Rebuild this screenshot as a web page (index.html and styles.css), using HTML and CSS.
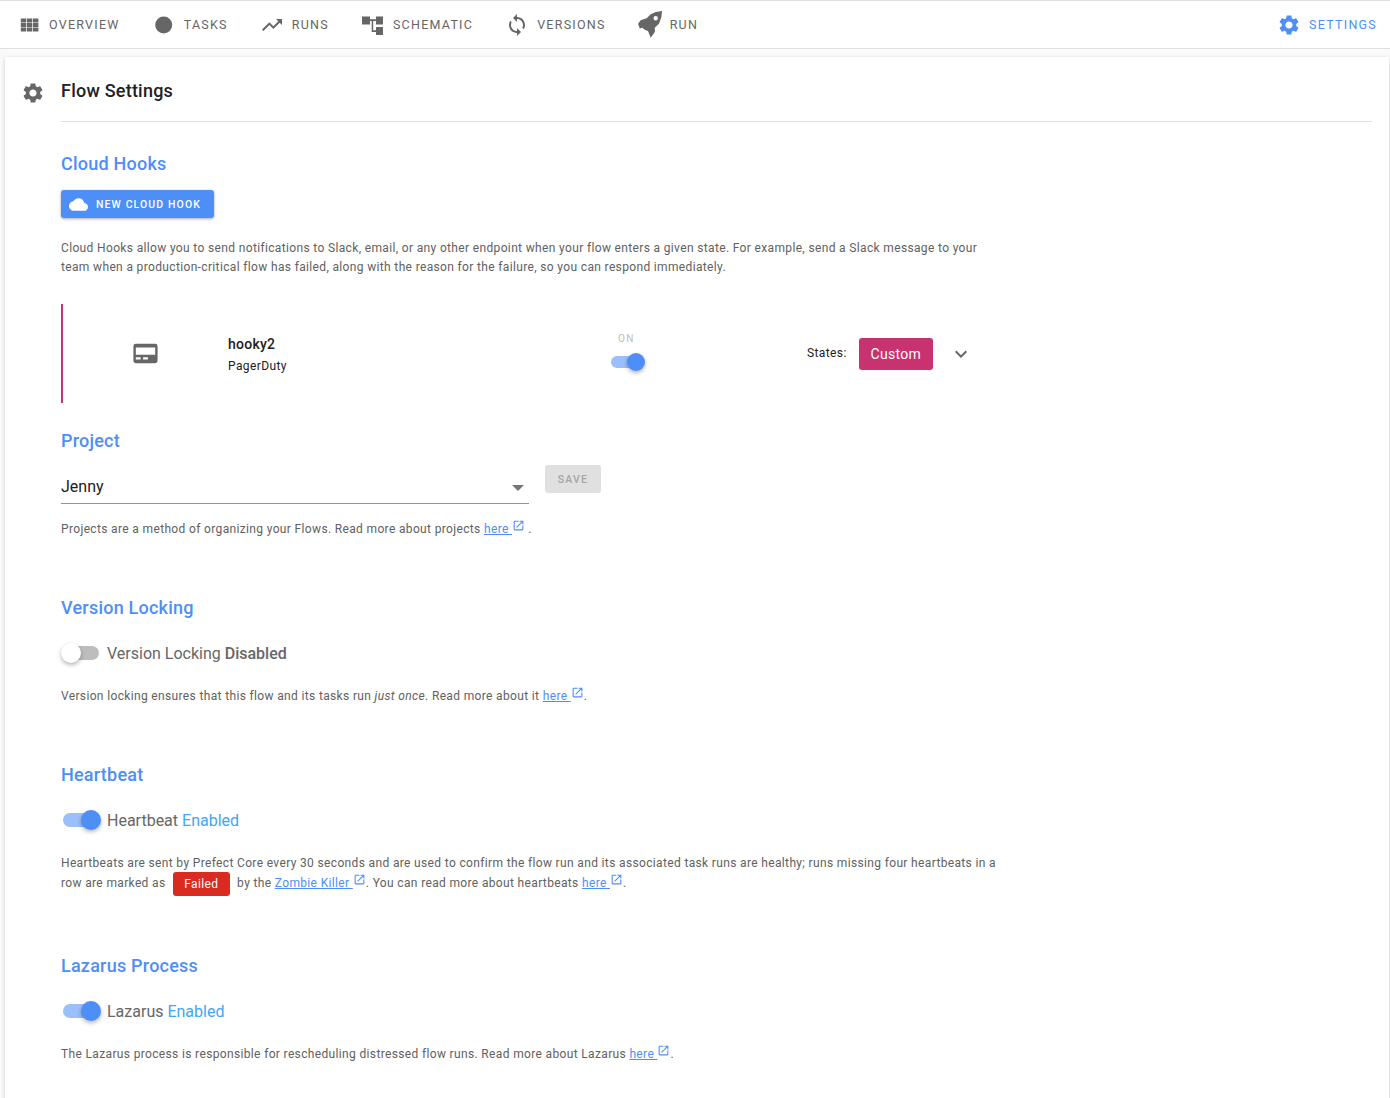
FILE: index.html
```html
<!DOCTYPE html>
<html lang="en">
    <head>
        <meta charset="utf-8">
        <title>Flow Settings</title>
        <link rel="stylesheet" href="styles.css">
    </head>
    <body>
        <svg class="sprite">
            <symbol id="gear" viewBox="0 0 24 24"><path d="M19.14 12.94c.04-.3.06-.61.06-.94 0-.32-.02-.64-.07-.94l2.03-1.58c.18-.14.23-.41.12-.61l-1.92-3.32c-.12-.22-.37-.29-.59-.22l-2.39.96c-.5-.38-1.03-.7-1.62-.94L14.4 2.81c-.04-.24-.24-.41-.48-.41h-3.84c-.24 0-.43.17-.47.41l-.36 2.54c-.59.24-1.13.57-1.62.94l-2.39-.96c-.22-.08-.47 0-.59.22L2.74 8.87c-.12.21-.08.47.12.61l2.03 1.58c-.05.3-.09.63-.09.94s.02.64.07.94l-2.03 1.58c-.18.14-.23.41-.12.61l1.92 3.32c.12.22.37.29.59.22l2.39-.96c.5.38 1.03.7 1.62.94l.36 2.54c.05.24.24.41.48.41h3.84c.24 0 .44-.17.47-.41l.36-2.54c.59-.24 1.13-.56 1.62-.94l2.39.96c.22.08.47 0 .59-.22l1.92-3.32c.12-.22.07-.47-.12-.61l-2.01-1.58zM12 15.6c-1.98 0-3.6-1.62-3.6-3.6s1.62-3.6 3.6-3.6 3.6 1.62 3.6 3.6-1.62 3.6-3.6 3.6z"/></symbol>
            <symbol id="open" viewBox="0 0 24 24"><path d="M19 19H5V5h7V3H5c-1.11 0-2 .9-2 2v14c0 1.1.89 2 2 2h14c1.1 0 2-.9 2-2v-7h-2v7zM14 3v2h3.59l-9.83 9.83 1.41 1.41L19 6.41V10h2V3h-7z"/></symbol>
        </svg>

        <nav class="tabs">
            <a class="tab">
                <svg class="tab-icon" viewBox="-0.6 0 24 24"><path d="M3.2 5.5h5.4v3.9H3.2zM9.3 5.5h5.4v3.9H9.3zM15.4 5.5h5.4v3.9h-5.4zM3.2 10h5.4v3.9H3.2zM9.3 10h5.4v3.9H9.3zM15.4 10h5.4v3.9h-5.4zM3.2 14.6h5.4v3.9H3.2zM9.3 14.6h5.4v3.9H9.3zM15.4 14.6h5.4v3.9h-5.4z"/></svg>
                Overview
            </a>
            <a class="tab">
                <svg class="tab-icon" viewBox="0 0 24 24"><circle cx="11.7" cy="12" r="8.5"/></svg>
                Tasks
            </a>
            <a class="tab">
                <svg class="tab-icon" viewBox="0 0 24 24"><path d="M16 6l2.29 2.29-4.88 4.88-4-4L2 16.59 3.41 18l6-6 4 4 6.3-6.29L22 12V6z"/></svg>
                Runs
            </a>
            <a class="tab">
                <svg class="tab-icon" viewBox="0 0 24 24"><path d="M1 3.5h8v2.7h6V3.500h7v8h-7V8h-2.800v9.200H15V14h7v8h-7v-3h-4.300V8H9v3.500H1z"/></svg>
                Schematic
            </a>
            <a class="tab">
                <svg class="tab-icon" viewBox="0 0 24 24"><path d="M12 4V1L8 5l4 4V6c3.31 0 6 2.69 6 6 0 1.01-.25 1.97-.7 2.8l1.46 1.46C19.54 15.03 20 13.57 20 12c0-4.42-3.58-8-8-8zm0 14c-3.31 0-6-2.69-6-6 0-1.01.25-1.97.7-2.8L5.24 7.74C4.46 8.97 4 10.43 4 12c0 4.42 3.58 8 8 8v3l4-4-4-4v3z"/></svg>
                Versions
            </a>
            <a class="tab">
                <svg class="tab-icon tab-icon-run" viewBox="0 0 24 27"><path fill-rule="evenodd" d="M0 12.700L2.700 9.300l6-2 4-4 5-2.300L24 0l-.6 6-2.400 6.700-4.300 4 .3 4-4.300 6-2.700-6.700-3.300-1.300-2.400-2-2.500.8zM17.700 5.100a2.200 2.200 0 1 0 0 4.400 2.200 2.200 0 0 0 0-4.400z"/></svg>
                Run
            </a>
            <a class="tab tab-active">
                <svg class="tab-icon"><use href="#gear"/></svg>
                Settings
            </a>
        </nav>

        <main class="card">
            <header class="card-title">
                <svg class="title-icon"><use href="#gear"/></svg>
                <h1>Flow Settings</h1>
            </header>

            <div class="content">
                <section class="hooks">
                    <h2>Cloud Hooks</h2>
                    <button class="btn-hook" type="button">
                        <svg viewBox="0 0 24 24"><path d="M19.35 10.04C18.67 6.59 15.64 4 12 4 9.11 4 6.6 5.64 5.35 8.04 2.34 8.36 0 10.91 0 14c0 3.31 2.69 6 6 6h13c2.76 0 5-2.24 5-5 0-2.64-2.05-4.78-4.65-4.96z"/></svg>
                        New Cloud Hook
                    </button>
                    <p class="text">Cloud Hooks allow you to send notifications to Slack, email, or any other endpoint when your flow enters a given state. For example, send a Slack message to your team when a production-critical flow has failed, along with the reason for the failure, so you can respond immediately.</p>

                    <div class="hook">
                        <svg class="hook-icon" viewBox="0 0 24 24"><path fill-rule="evenodd" d="M4 4h16a2 2 0 0 1 2 2v12a2 2 0 0 1-2 2H4a2 2 0 0 1-2-2V6a2 2 0 0 1 2-2zm0 3v6h16V7zm0 8v2h4v-2zm6 0v2h4v-2z"/></svg>
                        <div class="hook-name">
                            <strong>hooky2</strong>
                            <span>PagerDuty</span>
                        </div>
                        <div class="hook-toggle">
                            <span class="on-label">ON</span>
                            <span class="switch switch-on switch-small"></span>
                        </div>
                        <div class="hook-states">
                            <span class="states-label">States:</span>
                            <span class="btn-custom">Custom</span>
                            <svg class="chevron" viewBox="0 0 24 24"><path d="M7.41 8.59L12 13.17l4.59-4.58L18 10l-6 6-6-6z"/></svg>
                        </div>
                    </div>
                </section>

                <section class="project">
                    <h2>Project</h2>
                    <div class="project-row">
                        <div class="select">Jenny<span class="caret"></span></div>
                        <button class="btn-save" type="button">Save</button>
                    </div>
                    <p class="text">Projects are a method of organizing your Flows. Read more about projects <a href="#">here </a><svg class="open"><use href="#open"/></svg> .</p>
                </section>

                <section class="setting">
                    <h2>Version Locking</h2>
                    <div class="toggle-row">
                        <span class="switch"></span>
                        <span>Version Locking <b class="disabled">Disabled</b></span>
                    </div>
                    <p class="text">Version locking ensures that this flow and its tasks run <em>just once</em>. Read more about it <a href="#">here </a><svg class="open"><use href="#open"/></svg>.</p>
                </section>

                <section class="setting setting-heartbeat">
                    <h2>Heartbeat</h2>
                    <div class="toggle-row">
                        <span class="switch switch-on"></span>
                        <span>Heartbeat <span class="enabled">Enabled</span></span>
                    </div>
                    <p class="text text-tall">Heartbeats are sent by Prefect Core every 30 seconds and are used to confirm the flow run and its associated task runs are healthy; runs missing four heartbeats in a row are marked as <span class="failed">Failed</span> by the <a href="#">Zombie Killer </a><svg class="open"><use href="#open"/></svg>. You can read more about heartbeats <a href="#">here </a><svg class="open"><use href="#open"/></svg>.</p>
                </section>

                <section class="setting">
                    <h2>Lazarus Process</h2>
                    <div class="toggle-row">
                        <span class="switch switch-on"></span>
                        <span>Lazarus <span class="enabled">Enabled</span></span>
                    </div>
                    <p class="text">The Lazarus process is responsible for rescheduling distressed flow runs. Read more about Lazarus <a href="#">here </a><svg class="open"><use href="#open"/></svg>.</p>
                </section>
            </div>
        </main>
    </body>
</html>
```

FILE: styles.css
```css
* {
    box-sizing: border-box;
}
html, body {
    height: 1098px;
    overflow: hidden;
}
body {
    margin: 0;
    background-color: #fafafa;
    font-family: Roboto, "Liberation Sans", sans-serif;
    color: #212121;
}
.sprite {
    display: none;
}

/* top tabs */
.tabs {
    display: flex;
    align-items: center;
    height: 49px;
    padding: 0 13px 0 17px;
    background-color: #fff;
    border-top: 1px solid #e0e0e0;
    border-bottom: 1px solid #e0e0e0;
}
.tab {
    display: flex;
    align-items: center;
    gap: 8px;
    margin-right: 32px;
    font-size: 12.5px;
    font-weight: 400;
    letter-spacing: 1.25px;
    text-transform: uppercase;
    color: #666;
}
.tab-icon {
    flex: none;
    width: 24px;
    height: 24px;
    fill: #666;
}
.tab-icon-run {
    height: 27px;
}
.tab-active {
    margin-left: auto;
    margin-right: 0;
    color: #4e8ef7;
}
.tab-active .tab-icon {
    fill: #4e8ef7;
}

/* card */
.card {
    margin: 8px 1px 0 5px;
    height: 1060px;
    padding: 0 17px 0 16px;
    background-color: #fff;
    box-shadow: 0 1px 4px rgba(0, 0, 0, 0.18);
}
.card-title {
    display: flex;
    align-items: center;
    height: 64px;
    padding-top: 3px;
}
.title-icon {
    width: 24px;
    height: 24px;
    margin: 4px 16px 0 0;
    fill: #666;
}
.card-title h1 {
    margin: 0;
    font-size: 18px;
    font-weight: 500;
    letter-spacing: 0.225px;
    color: #212121;
}
.content {
    margin-left: 40px;
    border-top: 1px solid #e0e0e0;
}
h2 {
    margin: 0;
    font-size: 18px;
    line-height: 24px;
    font-weight: 500;
    letter-spacing: 0.225px;
    color: #4e8ef7;
}
.text {
    width: 940px;
    margin: 0;
    font-size: 12px;
    line-height: 19px;
    letter-spacing: 0.35px;
    color: #616161;
}
.text a {
    color: #4e8ef7;
    text-decoration: underline;
}
.open {
    width: 13px;
    height: 13px;
    vertical-align: 1px;
    fill: #4e8ef7;
}

/* cloud hooks */
.hooks {
    padding-top: 30px;
}
.btn-hook {
    display: flex;
    align-items: center;
    gap: 8px;
    height: 28px;
    margin: 14px 0 21px;
    padding: 0 13px 0 8px;
    border: 0;
    border-radius: 3px;
    background-color: #4e8ef7;
    box-shadow: 0 1px 3px rgba(0, 0, 0, 0.35);
    font-family: inherit;
    font-size: 10.5px;
    font-weight: 500;
    letter-spacing: 1.1px;
    text-transform: uppercase;
    color: #fff;
}
.btn-hook svg {
    width: 19px;
    height: 19px;
    fill: #fff;
}
.hook {
    display: grid;
    grid-template-columns: 165px 383px 196px auto;
    align-items: center;
    width: 940px;
    height: 99px;
    margin-top: 27px;
    border-left: 2px solid #c7326f;
}
.hook-icon {
    width: 29px;
    height: 29px;
    margin-left: 68px;
    fill: #666;
}
.hook-name {
    display: flex;
    flex-direction: column;
    gap: 7px;
    margin-top: 1px;
    font-size: 12px;
    letter-spacing: 0.4px;
}
.hook-name strong {
    font-size: 14px;
    font-weight: 500;
    letter-spacing: 0.25px;
}
.hook-toggle {
    display: flex;
    flex-direction: column;
    align-items: flex-start;
    gap: 11px;
    margin-bottom: 7px;
}
.on-label {
    margin-left: 7px;
    font-size: 10px;
    line-height: 12px;
    letter-spacing: 1.25px;
    color: #bdbdbd;
}
.hook-states {
    display: flex;
    align-items: center;
    gap: 12px;
    font-size: 12px;
    letter-spacing: 0.4px;
}
.states-label {
    margin-bottom: 2px;
}
.btn-custom {
    display: flex;
    align-items: center;
    justify-content: center;
    width: 74px;
    height: 32px;
    border-radius: 3px;
    background-color: #c7326f;
    font-size: 14px;
    letter-spacing: 0.3px;
    color: #fff;
}
.chevron {
    width: 24px;
    height: 24px;
    margin-left: 4px;
    fill: #666;
}

/* switches */
.switch {
    position: relative;
    display: block;
    flex: none;
    width: 36px;
    height: 14px;
    border-radius: 7px;
    background-color: #bdbdbd;
}
.switch::after {
    content: "";
    position: absolute;
    top: -3px;
    left: -2px;
    width: 20px;
    height: 20px;
    border-radius: 50%;
    background-color: #fff;
    box-shadow: 0 2px 4px rgba(0, 0, 0, 0.3);
}
.switch-on {
    background-color: #9bbffa;
}
.switch-on::after {
    left: auto;
    right: -2px;
    background-color: #4e8ef7;
}
.switch-small {
    width: 32px;
    height: 12px;
}
.switch-small::after {
    width: 18px;
    height: 18px;
}

/* project */
.project {
    padding-top: 26px;
}
.project-row {
    display: flex;
    align-items: flex-start;
    gap: 16px;
    margin-top: 12px;
}
.select {
    position: relative;
    width: 468px;
    height: 39px;
    padding-top: 12px;
    border-bottom: 1px solid #949494;
    font-size: 16px;
    line-height: 20px;
}
.caret {
    position: absolute;
    right: 5px;
    top: 20px;
    border: 6px solid transparent;
    border-top-color: #757575;
    border-bottom: 0;
}
.btn-save {
    width: 56px;
    height: 28px;
    border: 0;
    border-radius: 3px;
    background-color: #e0e0e0;
    font-family: inherit;
    font-size: 10.5px;
    font-weight: 500;
    letter-spacing: 1.25px;
    text-transform: uppercase;
    color: #a6a6a6;
}
.project .text {
    margin-top: 15px;
}

/* other settings */
.setting {
    padding-top: 57px;
}
.setting-heartbeat {
    padding-bottom: 4px;
}
.toggle-row {
    display: flex;
    align-items: center;
    gap: 8px;
    height: 24px;
    margin: 21px 0 21px 2px;
    font-size: 16px;
    color: #666;
}
.disabled {
    font-weight: 500;
}
.enabled {
    color: #42a5f5;
}
.failed {
    display: inline-block;
    width: 57px;
    height: 24px;
    margin: -4px 4px;
    border-radius: 3px;
    background-color: #d92b1f;
    font-size: 12px;
    line-height: 24px;
    text-align: center;
    vertical-align: middle;
    color: #fff;
}
.text-tall {
    line-height: 20px;
}
```
